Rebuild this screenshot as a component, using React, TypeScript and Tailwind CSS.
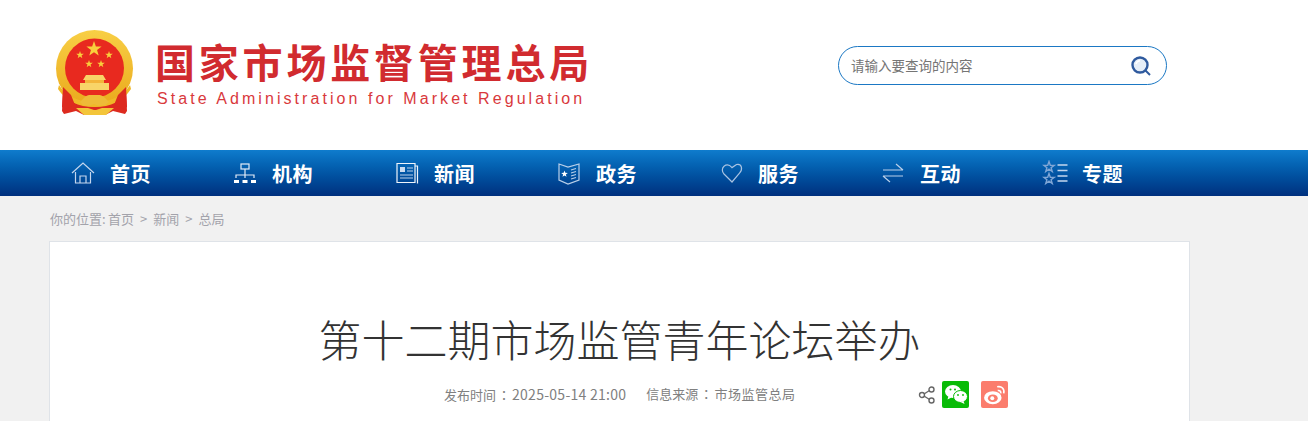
const cjk = { fontFamily: '"Noto Sans CJK SC", "Liberation Sans", sans-serif' };

// five-pointed star centred on cx, cy
const starPoints = (cx: number, cy: number, r: number) =>
	Array.from({ length: 10 }, (_, i) => {
		const rad = i % 2 === 0 ? r : r * 0.4;
		const a = (Math.PI / 5) * i - Math.PI / 2;
		return `${(cx + rad * Math.cos(a)).toFixed(2)},${(cy + rad * Math.sin(a)).toFixed(2)}`;
	}).join(" ");

const Emblem = () => (
	<svg width="84" height="90" viewBox="0 0 84 90">
		<defs>
			<linearGradient id="ring" x1="0" y1="0" x2="0" y2="1">
				<stop offset="0" stopColor="#f8cf45" />
				<stop offset="1" stopColor="#eaa91c" />
			</linearGradient>
		</defs>
		{/* ribbons sit behind the ring */}
		<path d="M10 62l12 12 19 2 19-2 13-12 1 20-2 3-12-3-8 4H31l-8-4-12 3-2-3z" fill="#dd2a1f" />
		<circle cx="41.500" cy="39.500" r="38.500" fill="url(#ring)" />
		<circle cx="41.500" cy="39" r="29.500" fill="#e8291f" />
		<polygon points={starPoints(41, 20, 8)} fill="#f9cf3c" />
		<polygon points={starPoints(27, 26, 4)} fill="#f9cf3c" />
		<polygon points={starPoints(56, 26, 4)} fill="#f9cf3c" />
		<polygon points={starPoints(36, 35, 4)} fill="#f9cf3c" />
		<polygon points={starPoints(48, 35, 4)} fill="#f9cf3c" />
		<path d="M33 46h17l3 5H30z" fill="#f8d468" />
		<path d="M32 51h19v3H32z" fill="#f3b53a" />
		<path d="M27 54h29v7H27z" fill="#f8d468" />
		<path d="M6 56c7 11 19 17 35.500 17S70 67 77 56l1 4c-8 12-20 18-36.500 18S13 72 5 60z" fill="#efb928" />
		<path d="M10 58l8 8 4 10-10 4-3-2zM73 58l-8 8-4 10 10 4 3-2z" fill="#dd2a1f" />
		<path d="M31 69c3-4 7-3 10.500-3s7-1 10.500 3l4 4-4 3-6 1-5-2-5 2-6-1-3-3z" fill="#eebb38" />
		<path d="M23 79h12l6 2h2l6-2h12l-8 7H31z" fill="#f3c53a" />
	</svg>
);

const navIconClass = "h-[26px] w-[26px] shrink-0";

const HomeIcon = () => (
	<svg className={navIconClass} viewBox="0 0 26 26" fill="none" stroke="#c3d6ee" strokeWidth="1.200">
		<path d="M2 13L13 3l11 10M5.500 12v11h15V12M10 23v-7h6v7" />
	</svg>
);

const OrgIcon = () => (
	<svg className={navIconClass} viewBox="0 0 26 26" fill="none" stroke="#e3ecf7" strokeWidth="1.200">
		<rect x="9" y="4" width="8" height="5" />
		<path d="M13 9v6M4 18v-3h18v3M13 15v3" />
		<path d="M2 20h5v3H2zM10.500 20h5v3h-5zM19 20h5v3h-5z" fill="#fff" stroke="none" />
	</svg>
);

const NewsIcon = () => (
	<svg className={navIconClass} viewBox="0 0 26 26" fill="none" stroke="#eef4fb" strokeWidth="1.200">
		<path d="M3 3.500h18v19H3zM21 6h2.500v17.500" />
		<path d="M6 7h5v5H6z" fill="#c9dbf0" stroke="none" />
		<path d="M13 8h6M13 11h6M6 15h13M6 18h13" stroke="#b9cfe9" />
	</svg>
);

const BookIcon = () => (
	<svg className={navIconClass} viewBox="0 0 26 26" fill="none" stroke="#b9cfe9" strokeWidth="1.200">
		<path d="M3 4l9 3 11-3v16l-11 4-9-4z" />
		<polygon points={starPoints(8.500, 14, 3.500)} fill="#fff" stroke="none" />
		<path d="M15 10l5-1.500M15 13l5-1.500M15 16l5-1.500M15 19l5-1.500" />
	</svg>
);

const HeartIcon = () => (
	<svg className={navIconClass} viewBox="0 0 26 26" fill="none" stroke="#a9c3e2" strokeWidth="1.200">
		<path d="M14 22L6 14C3.800 11.700 3.800 8 6 6.200c2.600-2 5.700-1.300 8 1.400l4.500-3.100c2.200-.5 4.300.5 4.900 2.700.5 2.200-.2 4.300-1.900 6z" />
	</svg>
);

const SwapIcon = () => (
	<svg className={navIconClass} viewBox="0 0 26 26" fill="none" stroke="#b9cfe9" strokeWidth="1.200">
		<path d="M3 10h20M16 4l7 6M23 16H3M10 22l-7-6" />
	</svg>
);

const StarListIcon = () => (
	<svg className={navIconClass} viewBox="0 0 26 26" fill="none" stroke="#7fa6d6" strokeWidth="1.400">
		<polygon points={starPoints(7, 7, 5.500)} />
		<polygon points={starPoints(7, 19, 5.500)} />
		<path d="M15.500 5h10M15.500 10.500h10M15.500 16h10M15.500 21h10" stroke="#c3d6ee" />
	</svg>
);

const navItems = [
	{ label: "首页", icon: <HomeIcon /> },
	{ label: "机构", icon: <OrgIcon /> },
	{ label: "新闻", icon: <NewsIcon /> },
	{ label: "政务", icon: <BookIcon /> },
	{ label: "服务", icon: <HeartIcon /> },
	{ label: "互动", icon: <SwapIcon /> },
	{ label: "专题", icon: <StarListIcon /> },
];

// colon out of the TC face, whose full-width punctuation is centred in its box
const Colon = () => (
	<span className="px-[1.500px]" style={{ fontFamily: '"Noto Sans CJK TC", sans-serif' }}>
		{"\uFF1A"}
	</span>
);

const App = () => {
	return (
		<div className="h-[421px] w-[1308px] overflow-hidden bg-[#f1f1f1]" style={cjk}>
			{/* Header */}
			<div className="flex h-[150px] items-start bg-white">
				<div className="mt-[29px] ml-[53px]">
					<Emblem />
				</div>
				<div className="mt-[34px] ml-[18px] w-[440px]">
					<div className="text-[40px] leading-[54px] font-bold tracking-[3.800px] whitespace-nowrap text-[#d12b2f]">国家市场监督管理总局</div>
					<div className="mt-[1px] ml-[2px] text-[16px] leading-[20px] tracking-[3.060px] whitespace-nowrap text-[#d9393c]" style={{ fontFamily: '"Liberation Sans", sans-serif' }}>
						State Administration for Market Regulation
					</div>
				</div>
				<div className="mt-[46px] ml-[243px] flex h-[39px] w-[329px] items-center justify-between rounded-[20px] border border-[#1b78c4] pr-[14px] pl-[12px]">
					<span className="text-[13.500px] text-[#757575]">请输入要查询的内容</span>
					<svg width="22" height="22" viewBox="0 0 22 22" fill="none">
						<circle cx="10" cy="10" r="7.500" fill="#e6eef8" stroke="#2f5a9e" strokeWidth="2.400" />
						<path d="M6 9c.5-2 2-3.200 4-3.300" stroke="#fff" strokeWidth="1.500" />
						<path d="M15.500 15.500l4.500 4.500" stroke="#2f5a9e" strokeWidth="2" />
					</svg>
				</div>
			</div>

			{/* Nav */}
			<div className="flex h-[46px] items-center bg-gradient-to-b from-[#0f7ccd] to-[#00307e] pl-[70px]">
				{navItems.map((item) => (
					<div key={item.label} className="flex w-[162px] items-center">
						{item.icon}
						<span className="ml-[14px] pt-[1px] text-[20px] font-bold tracking-[0.500px] text-white">{item.label}</span>
					</div>
				))}
			</div>

			{/* Breadcrumb */}
			<div className="flex h-[45px] items-center gap-[6px] pl-[50px] text-[13px] text-[#a3a3ab]">
				<span>
					你的位置<span className="inline-block w-[6px]">:</span>首页
				</span>
				<span>&gt;</span>
				<span>新闻</span>
				<span>&gt;</span>
				<span>总局</span>
			</div>

			{/* Article */}
			<div className="ml-[49px] h-[200px] w-[1141px] border border-[#dfe3e8] bg-white">
				<h1 className="mt-[66px] text-center text-[43px] leading-[60px] font-light text-[#333]">第十二期市场监管青年论坛举办</h1>
				<div className="mt-[13px] flex items-center">
					<div className="ml-[394px] flex gap-[20px] text-[13px] text-[#808080]">
						<span>
							发布时间
							<Colon />
							<span className="text-[14px] tracking-[0.270px]">2025-05-14 21:00</span>
						</span>
						<span>
							信息来源
							<Colon />
							<span className="tracking-[0.500px]">市场监管总局</span>
						</span>
					</div>
					<div className="ml-[123px] flex items-center">
						<svg width="18" height="18" viewBox="0 0 18 18" fill="none" stroke="#666" strokeWidth="1.400">
							<circle cx="4" cy="9" r="2.500" />
							<circle cx="13.500" cy="3.500" r="2.500" />
							<circle cx="13.500" cy="14.500" r="2.500" />
							<path d="M6 8l5.500-3.500M6 10l5.500 3.500" />
						</svg>
						<div className="ml-[6px] flex h-[27px] w-[27px] items-center justify-center rounded-[2px] bg-[#09bb07]">
							<svg width="24" height="21" viewBox="0 0 24 21" fill="#fff">
								<ellipse cx="9" cy="7.500" rx="8" ry="6.500" />
								<path d="M4.500 12l-1 3.500 4-2z" />
								<ellipse cx="16.500" cy="12.500" rx="7" ry="6" stroke="#09bb07" />
								<path d="M19.500 17l1 3-4-2z" />
								<circle cx="6.500" cy="5.500" r="1" fill="#09bb07" />
								<circle cx="11" cy="5.500" r="1" fill="#09bb07" />
								<circle cx="14" cy="11" r=".9" fill="#09bb07" />
								<circle cx="19" cy="11" r=".9" fill="#09bb07" />
							</svg>
						</div>
						<div className="ml-[12px] flex h-[27px] w-[27px] items-center justify-center rounded-[2px] bg-[#fb7d6d]">
							<svg width="24" height="22" viewBox="0 0 22 20" fill="none">
								<ellipse cx="9" cy="12.500" rx="8" ry="6" fill="#fff" />
								<ellipse cx="9" cy="13" rx="4.500" ry="3.500" fill="#fb7d6d" />
								<circle cx="8.500" cy="13" r="1.800" fill="#fff" />
								<path d="M13 2.500c4-1 7 2 6 6M13.500 6c2-.5 3 1 2.800 2.500" stroke="#fff" strokeWidth="1.500" />
							</svg>
						</div>
					</div>
				</div>
			</div>
		</div>
	);
};

export default App;
